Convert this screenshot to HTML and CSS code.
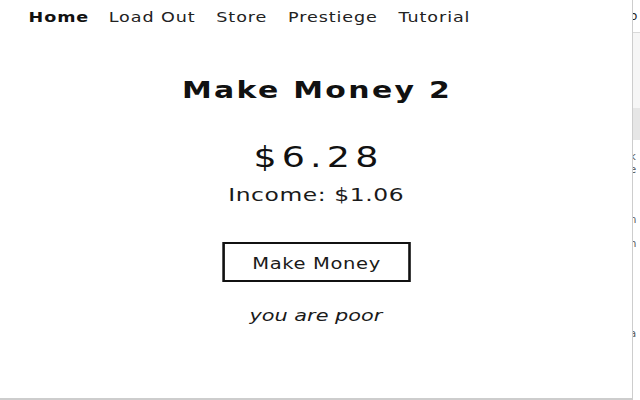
FILE: index.html
```html
<!DOCTYPE html>
<html lang="en">
<head>
<meta charset="utf-8">
<title>Make Money 2</title>
<link rel="stylesheet" href="styles.css">
</head>
<body>
<div class="frame">
  <div class="page">
    <nav class="nav">
      <a class="nav-link active" href="#">Home</a>
      <a class="nav-link" href="#">Load Out</a>
      <a class="nav-link" href="#">Store</a>
      <a class="nav-link" href="#">Prestiege</a>
      <a class="nav-link" href="#">Tutorial</a>
    </nav>
    <main class="main">
      <h1 class="title">Make Money 2</h1>
      <div class="money">$6.28</div>
      <div class="income">Income: $1.06</div>
      <button class="make-btn" type="button">Make Money</button>
      <p class="status">you are poor</p>
    </main>
  </div>
</div>
<aside class="side">
  <div class="side-top"><span class="cut">o</span></div>
  <div class="side-band"></div>
  <div class="side-grey"><span class="cut light">i</span></div>
  <div class="side-text">
    <div class="sl l1"><span class="cut">k</span></div>
    <div class="sl l2"><span class="cut">e</span></div>
    <div class="sl l3"><span class="cut">n</span></div>
    <div class="sl l4"><span class="cut">'</span></div>
    <div class="sl l5"><span class="cut">h</span></div>
    <div class="sl l6"><span class="cut">,</span></div>
    <div class="sl l7"><span class="cut">a</span></div>
    <div class="sl l8"><span class="cut light">'</span></div>
  </div>
</aside>
</body>
</html>
```

FILE: styles.css
```css
html, body {
  margin: 0;
  padding: 0;
}

body {
  display: flex;
  width: 640px;
  height: 400px;
  overflow: hidden;
  background: #ffffff;
  font-family: "DejaVu Sans", "Liberation Sans", sans-serif;
  color: #1a1a1a;
}

.frame {
  width: 632px;
  height: 398px;
  flex: none;
  overflow: hidden;
  background: #ffffff;
  border-right: 1px solid #cdcdcd;
  border-bottom: 2px solid #cdcdcd;
}

/* the captured page is shown stretched horizontally */
.page {
  width: 486px;
  transform: scaleX(1.3);
  transform-origin: 0 0;
}

/* navigation */
.nav {
  display: flex;
  gap: 16px;
  padding-left: 22px;
  height: 34px;
}

.nav-link {
  font-size: 13.5px;
  line-height: 34px;
  letter-spacing: 0.7px;
  color: #222222;
  text-decoration: none;
}

.nav-link.active {
  font-weight: bold;
  color: #111111;
  margin-right: -1px;
}

/* main column */
.main {
  display: flex;
  flex-direction: column;
  align-items: center;
}

.title {
  margin: 43px 0 0;
  font-size: 23px;
  line-height: 26px;
  font-weight: bold;
  letter-spacing: 1.8px;
  padding-left: 1.8px;
  color: #111111;
}

.money {
  margin-top: 40px;
  font-size: 28px;
  line-height: 30px;
  letter-spacing: 4px;
  padding-left: 4px;
  color: #111111;
}

.income {
  margin-top: 11px;
  font-size: 18px;
  line-height: 22px;
  letter-spacing: 0.45px;
  padding-left: 0.45px;
  color: #1a1a1a;
}

.make-btn {
  margin-top: 36px;
  box-sizing: border-box;
  width: 145px;
  height: 40px;
  padding: 4px 0 0 1px;
  border: 2px solid #111111;
  border-radius: 0;
  background: #ffffff;
  font-family: "DejaVu Sans", "Liberation Sans", sans-serif;
  font-size: 15px;
  line-height: 32px;
  letter-spacing: 0.5px;
  color: #1a1a1a;
  display: flex;
  align-items: flex-start;
  justify-content: center;
}

.status {
  margin: 24px 0 0;
  font-size: 16px;
  line-height: 20px;
  font-style: italic;
  color: #1a1a1a;
}

/* neighbouring pane, mostly cut off */
.side {
  width: 7px;
  flex: none;
  overflow: hidden;
  display: flex;
  flex-direction: column;
  font-size: 12px;
  color: #555555;
}

.cut {
  display: block;
  margin-left: -3px;
}

.cut.light {
  color: #9a9a9a;
}

.side-top {
  height: 32px;
  line-height: 32px;
  color: #222222;
}

.side-band {
  height: 75px;
  border-top: 1px solid #d9d9d9;
  background: #f6f6f6;
}

.side-grey {
  height: 32px;
  line-height: 32px;
  background: #e6e6e6;
}

.side-text {
  padding-top: 11px;
}

.sl {
  font-size: 10px;
  line-height: 12px;
  overflow: hidden;
}

.l1 { height: 13px; }
.l2 { height: 50px; }
.l3 { height: 12px; }
.l4 { height: 12px; }
.l5 { height: 12px; }
.l6 { height: 78px; }
.l7 { height: 12px; }
.l8 { height: 12px; }
```
